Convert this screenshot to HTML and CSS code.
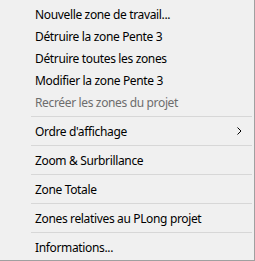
FILE: index.html
```html
<!DOCTYPE HTML>
<html>
<head>
  <title>Menu zones</title>
  <meta charset="utf-8">
  <link rel="stylesheet" href="styles.css">
</head>
<body>
  <div class="menu">
    <div class="item">Nouvelle zone de travail...</div>
    <div class="item">Détruire la zone Pente 3</div>
    <div class="item">Détruire toutes les zones</div>
    <div class="item">Modifier la zone Pente 3</div>
    <div class="item disabled">Recréer les zones du projet</div>
    <div class="sep"></div>
    <div class="item sub">
      <span>Ordre d'affichage</span>
      <svg class="arrow" width="5" height="8" viewBox="0 0 5 8">
        <polyline points="0.5,0.5 4,4 0.5,7.5" fill="none" stroke="#000" stroke-width="1"/>
      </svg>
    </div>
    <div class="sep"></div>
    <div class="item">Zoom &amp; Surbrillance</div>
    <div class="sep"></div>
    <div class="item">Zone Totale</div>
    <div class="sep"></div>
    <div class="item">Zones relatives au PLong projet</div>
    <div class="sep"></div>
    <div class="item">Informations...</div>
  </div>
</body>
</html>
```
FILE: styles.css
```css
body {
  margin: 0;
  font-family: "Noto Sans", "Open Sans", sans-serif;
  font-size: 12px;
  letter-spacing: -0.35px;
  color: #000;
}

.menu {
  width: 255px;
  height: 261px;
  box-sizing: border-box;
  background-color: #f0f0f0;
  border-right: 1px solid #a0a0a0;
  border-bottom: 1px solid #a0a0a0;
  padding: 3px 0 2px 0;
}

.item {
  display: flex;
  align-items: center;
  justify-content: space-between;
  height: 22px;
  padding-left: 35px;
  padding-right: 12px;
  white-space: nowrap;
}

.disabled {
  color: #6d6d6d;
}

.arrow {
  display: block;
}

.sep {
  height: 1px;
  margin: 3px 2px 3px 31px;
  background-color: #d7d7d7;
}
```
